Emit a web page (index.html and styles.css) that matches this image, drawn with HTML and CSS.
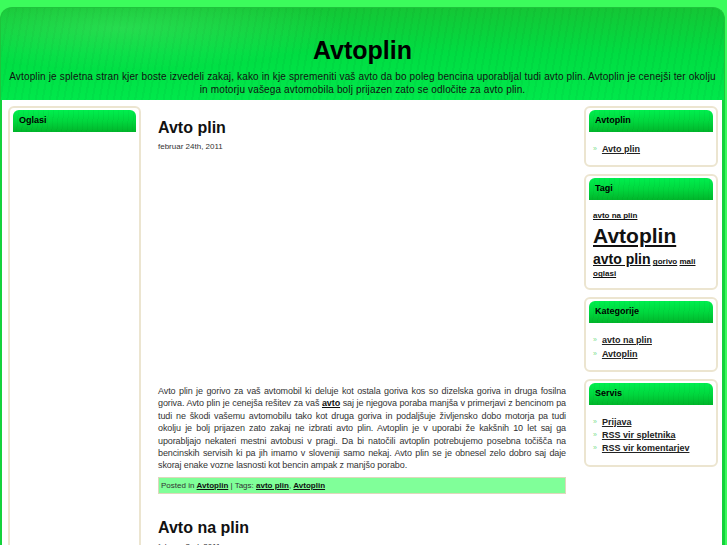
FILE: index.html
```html
<!DOCTYPE html>
<html lang="sl">
<head>
<meta charset="utf-8">
<title>Avtoplin</title>
<link rel="stylesheet" href="styles.css">
</head>
<body>
<div class="page">
  <header class="header">
    <h1 class="site-title">Avtoplin</h1>
    <p class="site-desc">Avtoplin je spletna stran kjer boste izvedeli zakaj, kako in kje spremeniti vaš avto da bo poleg bencina uporabljal tudi avto plin. Avtoplin je cenejši ter okolju in motorju vašega avtomobila bolj prijazen zato se odločite za avto plin.</p>
  </header>
  <div class="wrap">
    <aside class="left">
      <div class="widget widget-tall">
        <h2 class="widget-title">Oglasi</h2>
      </div>
    </aside>
    <main class="content">
      <article class="post">
        <h2 class="post-title">Avto plin</h2>
        <div class="post-date">februar 24th, 2011</div>
        <div class="ad-space"></div>
        <p class="post-text">Avto plin je gorivo za vaš avtomobil ki deluje kot ostala goriva kos so dizelska goriva in druga fosilna goriva. Avto plin je cenejša rešitev za vaš <a href="#">avto</a> saj je njegova poraba manjša v primerjavi z bencinom pa tudi ne škodi vašemu avtomobilu tako kot druga goriva in podaljšuje življensko dobo motorja pa tudi okolju je bolj prijazen zato zakaj ne izbrati avto plin. Avtoplin je v uporabi že kakšnih 10 let saj ga uporabljajo nekateri mestni avtobusi v pragi. Da bi natočili avtoplin potrebujemo posebna točišča na bencinskih servisih ki pa jih imamo v sloveniji samo nekaj. Avto plin se je obnesel zelo dobro saj daje skoraj enake vozne lasnosti kot bencin ampak z manjšo porabo.</p>
        <div class="post-meta">Posted in <a href="#">Avtoplin</a> | Tags: <a href="#">avto plin</a>, <a href="#">Avtoplin</a></div>
      </article>
      <article class="post">
        <h2 class="post-title">Avto na plin</h2>
        <div class="post-date">februar 2nd, 2011</div>
      </article>
    </main>
    <aside class="right">
      <div class="widget">
        <h2 class="widget-title">Avtoplin</h2>
        <ul class="links">
          <li><a href="#">Avto plin</a></li>
        </ul>
      </div>
      <div class="widget">
        <h2 class="widget-title">Tagi</h2>
        <div class="tags">
          <a href="#" class="t-s">avto na plin</a>
          <a href="#" class="t-xl">Avtoplin</a>
          <a href="#" class="t-m">avto plin</a> <a href="#" class="t-s">gorivo</a> <a href="#" class="t-s">mali oglasi</a>
        </div>
      </div>
      <div class="widget">
        <h2 class="widget-title">Kategorije</h2>
        <ul class="links">
          <li><a href="#">avto na plin</a></li>
          <li><a href="#">Avtoplin</a></li>
        </ul>
      </div>
      <div class="widget">
        <h2 class="widget-title">Servis</h2>
        <ul class="links">
          <li><a href="#">Prijava</a></li>
          <li><a href="#">RSS vir spletnika</a></li>
          <li><a href="#">RSS vir komentarjev</a></li>
        </ul>
      </div>
    </aside>
  </div>
</div>
</body>
</html>
```

FILE: styles.css
```css
html, body {
  margin: 0;
  padding: 0;
}
body {
  background: #3cfc5c;
  font-family: "Liberation Sans", Arial, sans-serif;
  color: #333;
  height: 545px;
  overflow: hidden;
}
.page {
  width: 725px;
  padding-top: 7px;
}
.header {
  height: 92px;
  border: 1px solid #1fc43c;
  border-bottom: none;
  border-radius: 12px 12px 0 0;
  background:
    radial-gradient(ellipse 320px 60px at 120px 20px, rgba(120,255,140,0.25), rgba(0,0,0,0) 70%),
    repeating-linear-gradient(100deg, rgba(0,0,0,0.03) 0 2px, rgba(0,0,0,0) 2px 7px),
    linear-gradient(#14c635, #00dd42 50%, #00e84b);
  text-align: center;
  overflow: hidden;
}
.site-title {
  margin: 27px 0 0;
  font-size: 25px;
  line-height: 30px;
  font-weight: bold;
  color: #000;
}
.site-desc {
  margin: 5px 6px 0;
  font-size: 10px;
  line-height: 13px;
  color: #111;
  letter-spacing: 0.15px;
}
.wrap {
  display: flex;
  align-items: flex-start;
  background: #fff;
  border-left: 2px solid #14d23c;
  border-right: 3px solid #14d23c;
  padding: 6px 4px 0 6px;
  height: 600px;
}
.left {
  width: 133px;
  flex: none;
}
.content {
  width: 408px;
  flex: none;
  margin: 0 18px 0 17px;
}
.right {
  width: 134px;
  flex: none;
  display: flex;
  flex-direction: column;
  gap: 7px;
}
.widget {
  border: 2px solid #ece5d0;
  border-radius: 6px;
  padding: 2px 3px 9px;
  background: #fff;
}
.widget-tall {
  height: 600px;
}
.widget-title {
  margin: 0;
  height: 22px;
  line-height: 20px;
  padding-left: 6px;
  font-size: 9px;
  font-weight: bold;
  color: #000;
  border-radius: 6px 6px 0 0;
  background:
    repeating-linear-gradient(95deg, rgba(0,0,0,0.035) 0 1px, rgba(0,0,0,0) 1px 5px),
    linear-gradient(#00ef4e, #00d83e 50%, #00b52a);
}
.links {
  list-style: none;
  margin: 11px 0 0;
  padding: 0 0 0 4px;
}
.links li {
  font-size: 9px;
  line-height: 12.3px;
}
.links li::before {
  content: "»";
  color: #7fe08f;
  font-size: 7px;
  margin-right: 5px;
  position: relative;
  top: -1px;
}
a {
  color: #222;
  font-weight: bold;
  text-decoration: underline;
}
.tags {
  margin-top: 10px;
  margin-bottom: -1px;
  padding-left: 4px;
  font-size: 8px;
  line-height: 12px;
}
.tags a {
  color: #111;
}
.t-s { font-size: 8px; line-height: 12px; }
.t-m { font-size: 14px; line-height: 18px; }
.t-xl { font-size: 21px; line-height: 28px; display: block; }
.post-title {
  margin: 12px 0 0;
  font-size: 16px;
  line-height: 20px;
  font-weight: bold;
  color: #111;
}
.post-date {
  margin-top: 4px;
  font-size: 8px;
  line-height: 10px;
  color: #333;
}
.ad-space {
  height: 233px;
}
.post-text {
  margin: 0;
  font-size: 9px;
  line-height: 12.4px;
  text-align: justify;
  color: #333;
  letter-spacing: -0.1px;
}
.post-text a {
  color: #111;
}
.post-meta {
  margin-top: 5px;
  height: 15px;
  line-height: 15px;
  padding-left: 2px;
  font-size: 8px;
  background: #80ff99;
  border: 1px solid #ddd8bc;
  color: #333;
}
.post-meta a {
  color: #111;
}
.post + .post {
  margin-top: 24px;
}
```
